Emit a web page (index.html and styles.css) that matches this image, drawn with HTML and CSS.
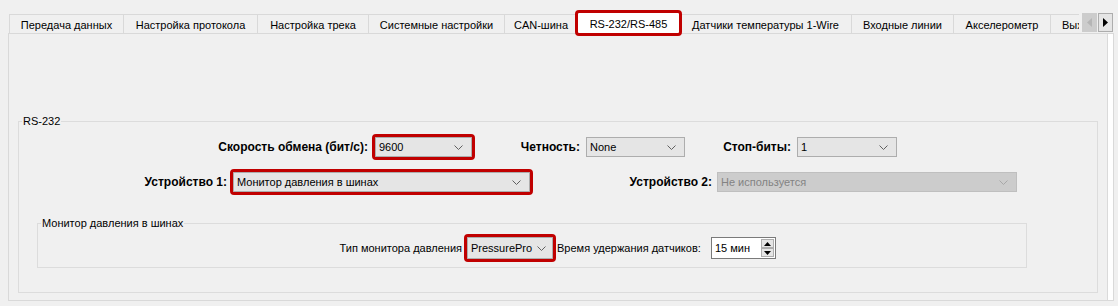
FILE: index.html
```html
<!DOCTYPE html>
<html lang="ru">
<head>
<meta charset="utf-8">
<link rel="stylesheet" href="styles.css">
</head>
<body>
<div class="tabwidget">
  <div class="tabbar">
    <div class="tabs">
      <div class="tab t1">Передача данных</div>
      <div class="tab t2">Настройка протокола</div>
      <div class="tab t3">Настройка трека</div>
      <div class="tab t4">Системные настройки</div>
      <div class="tab t5">CAN-шина</div>
      <div class="tab t6 selected">RS-232/RS-485</div>
      <div class="tab t7">Датчики температуры 1-Wire</div>
      <div class="tab t8">Входные линии</div>
      <div class="tab t9">Акселерометр</div>
      <div class="tab t10">Выходные линии</div>
    </div>
    <div class="scroller">
      <div class="sbtn disabled">
        <svg width="5" height="9" viewBox="0 0 5 9"><polygon points="5,0 0,4.5 5,9" fill="#b5b5b5"/></svg>
      </div>
      <div class="sbtn">
        <svg width="5" height="9" viewBox="0 0 5 9"><polygon points="0,0 5,4.5 0,9" fill="#000"/></svg>
      </div>
    </div>
  </div>
  <div class="pane">
    <div class="content">
      <div class="group rs232">
        <span class="legend">RS-232</span>
        <div class="row row1">
          <label class="lbl bold l-speed">Скорость обмена (бит/с):</label>
          <div class="combo c-speed hl"><span>9600</span><svg class="chev" width="9" height="5" viewBox="0 0 9 5"><polyline points="0.5,0.5 4.5,4.5 8.5,0.5" fill="none" stroke="#606060"/></svg></div>
          <label class="lbl bold l-parity">Четность:</label>
          <div class="combo c-parity"><span>None</span><svg class="chev" width="9" height="5" viewBox="0 0 9 5"><polyline points="0.5,0.5 4.5,4.5 8.5,0.5" fill="none" stroke="#606060"/></svg></div>
          <label class="lbl bold l-stop">Стоп-биты:</label>
          <div class="combo c-stop"><span>1</span><svg class="chev" width="9" height="5" viewBox="0 0 9 5"><polyline points="0.5,0.5 4.5,4.5 8.5,0.5" fill="none" stroke="#606060"/></svg></div>
        </div>
        <div class="row row2">
          <label class="lbl bold l-dev1">Устройство 1:</label>
          <div class="combo c-dev1 hl"><span>Монитор давления в шинах</span><svg class="chev" width="9" height="5" viewBox="0 0 9 5"><polyline points="0.5,0.5 4.5,4.5 8.5,0.5" fill="none" stroke="#606060"/></svg></div>
          <label class="lbl bold l-dev2">Устройство 2:</label>
          <div class="combo c-dev2 disabled"><span>Не используется</span><svg class="chev" width="9" height="5" viewBox="0 0 9 5"><polyline points="0.5,0.5 4.5,4.5 8.5,0.5" fill="none" stroke="#a8a8a8"/></svg></div>
        </div>
        <div class="group tpms">
          <span class="legend">Монитор давления в шинах</span>
          <div class="row row3">
            <label class="lbl l-type">Тип монитора давления</label>
            <div class="combo c-type hl"><span>PressurePro</span><svg class="chev" width="9" height="5" viewBox="0 0 9 5"><polyline points="0.5,0.5 4.5,4.5 8.5,0.5" fill="none" stroke="#606060"/></svg></div>
            <label class="lbl l-hold">Время удержания датчиков:</label>
            <div class="spin">
              <span class="spin-val">15 мин</span>
              <div class="spin-btns">
                <div class="sb"><svg width="7" height="4" viewBox="0 0 7 4"><polygon points="0,4 3.5,0 7,4" fill="#000"/></svg></div>
                <div class="sb"><svg width="7" height="4" viewBox="0 0 7 4"><polygon points="0,0 3.5,4 7,0" fill="#000"/></svg></div>
              </div>
            </div>
          </div>
        </div>
      </div>
    </div>
  </div>
</div>
</body>
</html>
```
FILE: styles.css
```css
html, body {
  margin: 0;
  padding: 0;
}
body {
  width: 1118px;
  height: 306px;
  overflow: hidden;
  background: #f0f0f0;
  font-family: "Liberation Sans", Arial, sans-serif;
  font-size: 11px;
  color: #000;
}
.tabwidget {
  padding: 14px 0 0 8px;
  width: 1106px;
}
.tabbar {
  position: relative;
  height: 19px;
  padding-left: 1px;
  z-index: 2;
}
.tabs {
  display: flex;
  height: 19px;
}
.tab {
  flex: none;
  box-sizing: border-box;
  height: 19px;
  border: 1px solid #d9d9d9;
  border-bottom: none;
  border-right: none;
  background: #f0f0f0;
  display: flex;
  align-items: center;
  justify-content: center;
  white-space: nowrap;
  line-height: 14px;
  padding-top: 1px;
}
.t1 { width: 114px; }
.t2 { width: 134px; }
.t3 { width: 111px; }
.t4 { width: 136px; }
.t5 { width: 73px; }
.t6 { width: 103px; }
.t7 { width: 171px; border-left: none; }
.t8 { width: 102px; }
.t9 { width: 97px; }
.t10 {
  width: 29px;
  overflow: hidden;
  justify-content: flex-start;
  padding-left: 11px;
}
.tab.selected {
  background: #ffffff;
  height: 22px;
  margin-top: -2px;
  border: 1px solid #d9d9d9;
  border-bottom: none;
  outline: 3px solid #c00000;
  outline-offset: -1px;
  border-radius: 2px;
  position: relative;
  z-index: 2;
  padding-top: 0;
}
.scroller {
  position: absolute;
  right: 1px;
  top: -1px;
  display: flex;
  gap: 1px;
  z-index: 3;
}
.sbtn {
  width: 15px;
  height: 19px;
  box-sizing: border-box;
  border: 1px solid #adadad;
  background: #e5e5e5;
  display: flex;
  align-items: center;
  justify-content: center;
}
.sbtn.disabled {
  border-color: #cccccc;
  background: #cccccc;
}
.pane {
  box-sizing: border-box;
  width: 1106px;
  height: 268px;
  border: 1px solid #d9d9d9;
  background: #ffffff;
  padding: 0 5px 0 0;
}
.content {
  height: 100%;
  box-sizing: border-box;
  background: #f0f0f0;
  border-right: 1px solid #dadada;
  padding: 87px 9px 0 9px;
}
.group {
  position: relative;
  border: 1px solid #dcdcdc;
  box-sizing: border-box;
}
.legend {
  position: absolute;
  top: -8px;
  left: 3px;
  padding: 0 1px;
  background: #f0f0f0;
  line-height: 14px;
  white-space: nowrap;
}
.rs232 {
  width: 1080px;
  height: 172px;
  padding-top: 15px;
}
.row {
  display: flex;
  align-items: center;
  height: 20px;
}
.row2 {
  margin-top: 15px;
}
.lbl {
  flex: none;
  white-space: nowrap;
  box-sizing: border-box;
}
.bold {
  font-weight: bold;
  font-size: 12px;
  text-align: right;
}
.l-speed { width: 349px; margin-right: 7px; }
.l-parity { width: 108px; margin-right: 6px; }
.l-stop { width: 106px; margin-right: 6px; }
.l-dev1 { width: 208px; margin-right: 6px; }
.l-dev2 { width: 182px; margin-right: 5px; }
.combo {
  flex: none;
  box-sizing: border-box;
  height: 20px;
  border: 1px solid #adadad;
  background: #e5e5e5;
  display: flex;
  align-items: center;
  justify-content: space-between;
  padding: 0 8px 0 3px;
  white-space: nowrap;
  line-height: 14px;
}
.combo .chev {
  flex: none;
}
.combo.disabled {
  background: #cccccc;
  border-color: #bfbfbf;
  color: #838383;
}
.combo.hl {
  outline: 3px solid #c00000;
  outline-offset: 0;
  border-radius: 1px;
}
.c-speed { width: 97px; }
.c-parity { width: 99px; }
.c-stop { width: 100px; }
.c-dev1 { width: 297px; }
.c-dev2 { width: 300px; }
.tpms {
  margin: 31px 70px 0 18px;
  height: 45px;
  padding-top: 13px;
}
.row3 {
  height: 22px;
}
.l-type {
  width: 424px;
  text-align: right;
  margin-right: 5px;
}
.c-type {
  width: 86px;
  height: 22px;
  padding-right: 6px;
}
.l-hold {
  width: 150px;
  margin-left: 4px;
  margin-right: 4px;
}
.spin {
  flex: none;
  box-sizing: border-box;
  width: 65px;
  height: 22px;
  border: 1px solid #7a7a7a;
  background: #ffffff;
  display: flex;
  align-items: center;
  justify-content: space-between;
  padding: 0 1px 0 3px;
}
.spin-btns {
  display: flex;
  flex-direction: column;
  height: 18px;
}
.sb {
  box-sizing: border-box;
  width: 13px;
  height: 9px;
  border: 1px solid #adadad;
  background: #e5e5e5;
  display: flex;
  align-items: center;
  justify-content: center;
}
```
